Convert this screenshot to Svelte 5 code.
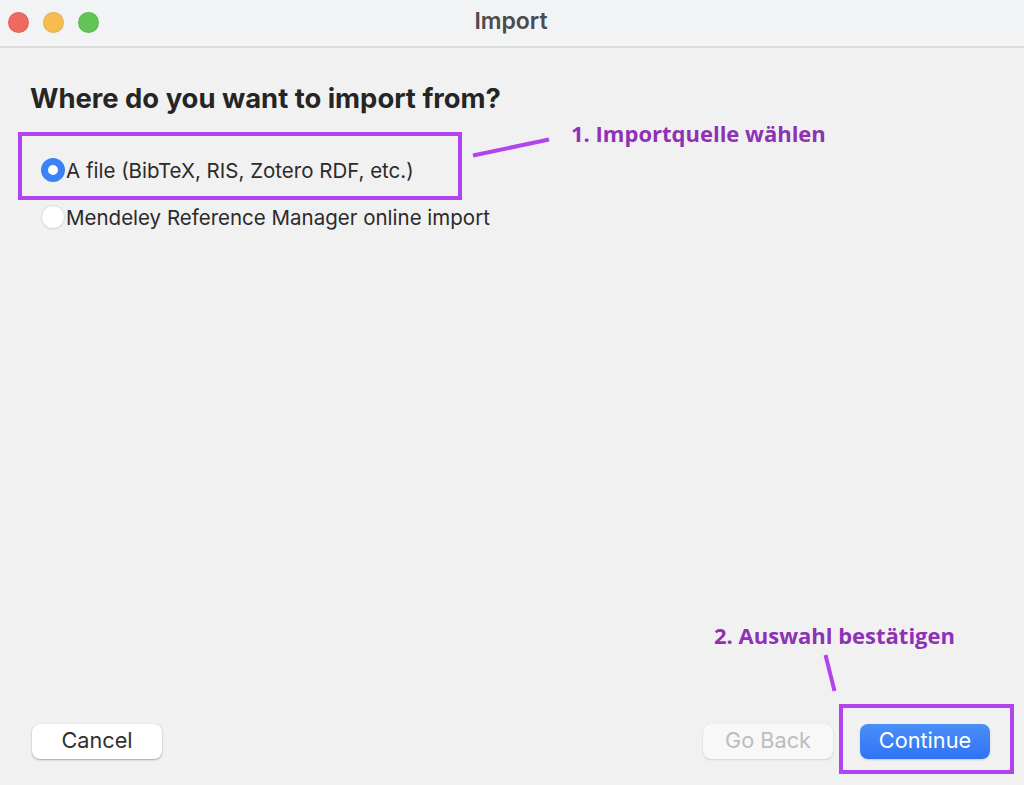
<script>
  let source = $state('file');

  const options = [
    { id: 'file', label: 'A file (BibTeX, RIS, Zotero RDF, etc.)' },
    { id: 'mendeley', label: 'Mendeley Reference Manager online import' }
  ];
</script>

<div class="window">
  <header class="titlebar">
    <div class="lights">
      <span class="light red"></span>
      <span class="light yellow"></span>
      <span class="light green"></span>
    </div>
    <div class="title">Import</div>
  </header>

  <main class="content">
    <h1>Where do you want to import from?</h1>
    <div class="options">
      {#each options as opt}
        <button class="option" type="button" onclick={() => (source = opt.id)}>
          <span class="radio" class:checked={source === opt.id}></span>
          <span class="label">{opt.label}</span>
        </button>
      {/each}
    </div>
  </main>

  <footer class="footer">
    <button class="btn" type="button">Cancel</button>
    <div class="right">
      <button class="btn disabled" type="button">Go Back</button>
      <button class="btn primary" type="button">Continue</button>
    </div>
  </footer>

  <!-- annotations drawn on top of the screenshot -->
  <div class="mark mark-source"></div>
  <div class="mark mark-continue"></div>
  <svg class="lines" width="1024" height="785" viewBox="0 0 1024 785">
    <line x1="473" y1="155.5" x2="549" y2="139.5" />
    <line x1="825.5" y1="655" x2="834.5" y2="691" />
  </svg>
  <div class="note note-source">1. Importquelle wählen</div>
  <div class="note note-continue">2. Auswahl bestätigen</div>
</div>

<style>
  :global(body) {
    margin: 0;
    background: #f1f1f1;
  }

  .window {
    position: relative;
    display: flex;
    flex-direction: column;
    width: 1024px;
    height: 785px;
    overflow: hidden;
    background: #f1f1f1;
    color: #262626;
    font-family: Inter, "Liberation Sans", sans-serif;
  }

  .titlebar {
    position: relative;
    display: flex;
    align-items: center;
    justify-content: center;
    flex: none;
    height: 48px;
    box-sizing: border-box;
    background: #f2f3f5;
    border-bottom: 2px solid #dcdcdd;
  }

  .lights {
    position: absolute;
    left: 8px;
    top: 12px;
    display: flex;
    gap: 14px;
  }

  .light {
    width: 21px;
    height: 21px;
    border-radius: 50%;
    box-sizing: border-box;
    border: 1px solid rgba(0, 0, 0, 0.07);
  }

  .red { background: #ee6a5f; }
  .yellow { background: #f5bd4f; }
  .green { background: #61c454; }

  .title {
    font-size: 23px;
    font-weight: 600;
    color: #4c4c50;
    margin: -4px 2px 0 0;
  }

  .content {
    flex: 1;
    padding: 34px 30px 0;
  }

  h1 {
    margin: 0;
    font-size: 27.4px;
    line-height: 32px;
    font-weight: 700;
    color: #252525;
  }

  .options {
    display: flex;
    flex-direction: column;
    gap: 23px;
    margin: 44px 0 0 11px;
  }

  .option {
    display: flex;
    align-items: center;
    gap: 2px;
    height: 24px;
    padding: 0;
    border: 0;
    background: none;
    font: inherit;
    font-size: 20.5px;
    color: #2b2b2b;
    cursor: pointer;
  }

  .radio {
    flex: none;
    width: 24px;
    height: 24px;
    box-sizing: border-box;
    border-radius: 50%;
    background: #fff;
    border: 1px solid #dcdcdc;
    box-shadow: 0 1px 1px rgba(0, 0, 0, 0.06);
  }

  .radio.checked {
    border: 7.5px solid #3b82f7;
    box-shadow: none;
  }

  .label {
    margin-left: -1px;
    padding-top: 1px;
  }

  .footer {
    display: flex;
    justify-content: space-between;
    flex: none;
    padding: 0 34px 26px 32px;
  }

  .right {
    display: flex;
    gap: 27px;
  }

  .btn {
    width: 130px;
    height: 35px;
    padding: 0 0 4px;
    border: 0;
    border-radius: 8px;
    background: #fff;
    font: inherit;
    font-size: 21.7px;
    color: #303030;
    box-shadow: 0 1px 2px rgba(0, 0, 0, 0.3), 0 0 1px rgba(0, 0, 0, 0.15);
    cursor: pointer;
  }

  .btn.disabled {
    background: #f8f8f8;
    color: #bdbdbd;
    box-shadow: 0 1px 2px rgba(0, 0, 0, 0.12), 0 0 1px rgba(0, 0, 0, 0.1);
  }

  .btn.primary {
    background: linear-gradient(#4b8ff8, #2f73f5);
    color: #fff;
    box-shadow: 0 1px 2px rgba(0, 0, 0, 0.15);
  }

  .mark {
    position: absolute;
    box-sizing: border-box;
    border: 4px solid #b244ee;
  }

  .mark-source {
    left: 18px;
    top: 132px;
    width: 444px;
    height: 68px;
  }

  .mark-continue {
    left: 839px;
    top: 704px;
    width: 175px;
    height: 70px;
  }

  .lines {
    position: absolute;
    left: 0;
    top: 0;
    pointer-events: none;
  }

  .lines line {
    stroke: #b244ee;
    stroke-width: 4;
  }

  .note {
    position: absolute;
    font-family: "Open Sans", "Liberation Sans", sans-serif;
    font-size: 22px;
    line-height: 28px;
    font-weight: 700;
    color: #8e31b5;
    white-space: nowrap;
  }

  .note-source {
    left: 571px;
    top: 119px;
  }

  .note-continue {
    left: 714px;
    top: 621px;
  }
</style>
